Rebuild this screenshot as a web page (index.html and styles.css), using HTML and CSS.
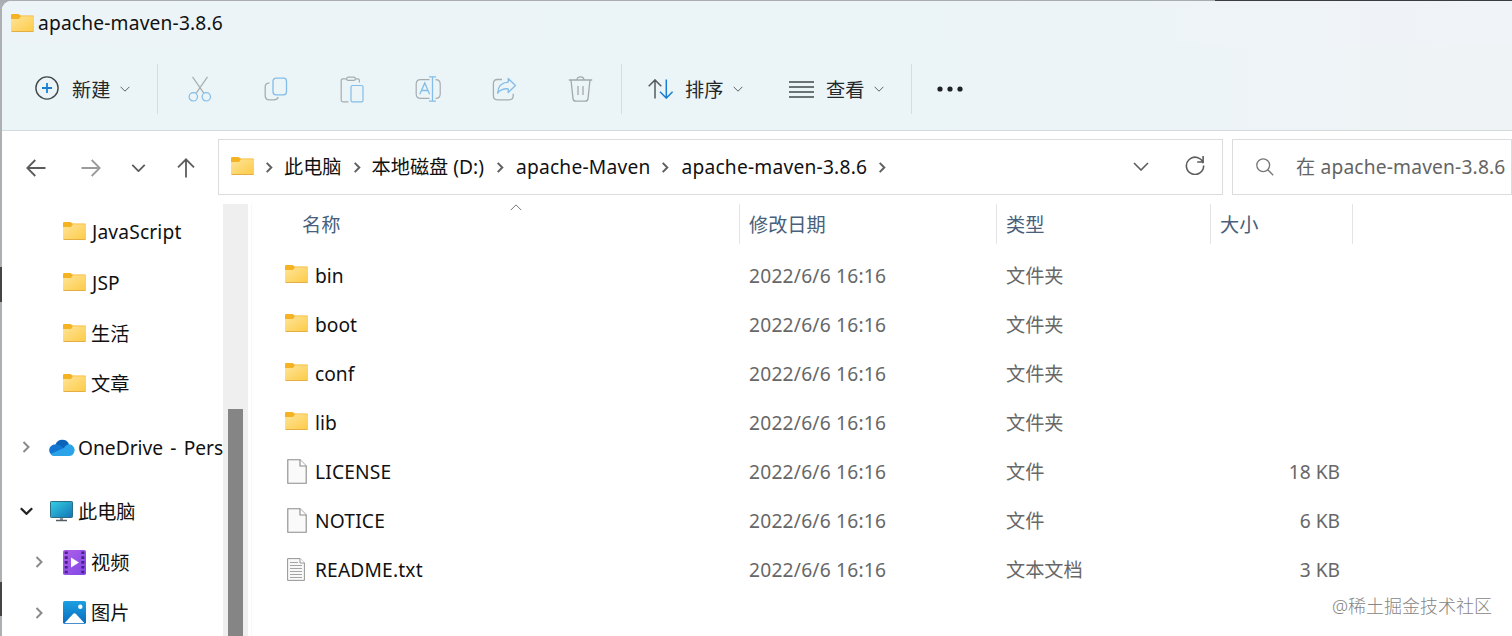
FILE: index.html
```html
<!DOCTYPE html>
<html lang="zh-CN">
<head>
    <meta charset="UTF-8">
    <meta name="viewport" content="width=device-width, initial-scale=1.0">
    <title>apache-maven-3.8.6</title>
    <link rel="stylesheet" href="styles.css">
</head>
<body>

<!-- shared icons -->
<svg class="defs" width="0" height="0">
    <defs>
        <linearGradient id="folderFill" x1="0" y1="0" x2="1" y2="1">
            <stop offset="0" stop-color="#ffe59a"/>
            <stop offset="1" stop-color="#fcca45"/>
        </linearGradient>
        <linearGradient id="screenFill" x1="0" y1="0" x2="1" y2="1">
            <stop offset="0" stop-color="#35cfe3"/>
            <stop offset="1" stop-color="#1273b8"/>
        </linearGradient>
        <linearGradient id="videoFill" x1="0" y1="0" x2="1" y2="1">
            <stop offset="0" stop-color="#b05fe8"/>
            <stop offset="1" stop-color="#8048e6"/>
        </linearGradient>
        <linearGradient id="pictureFill" x1="0" y1="0" x2="0" y2="1">
            <stop offset="0" stop-color="#1ba0e2"/>
            <stop offset="1" stop-color="#0b6cbd"/>
        </linearGradient>
    </defs>
    <symbol id="folder" viewBox="0 0 23 18">
        <path d="M0 1.2Q0 0 1.2 0H7.5L9.7 1.5H21.8Q23 1.5 23 2.7V8H0Z" fill="#f5b324"/>
        <path d="M0 5H8L10 2.2H22.2Q23 2.2 23 3V16.8Q23 18 21.8 18H1.2Q0 18 0 16.8Z" fill="url(#folderFill)"/>
        <path d="M.6 17.5H22.4" stroke="#e5ae43" stroke-width="1"/>
    </symbol>
    <symbol id="file" viewBox="0 0 20 25">
        <path d="M.8 .8H13L19.2 7V24.2H.8Z" fill="#fafafa" stroke="#8a8a8a" stroke-width="1.1"/>
        <path d="M13 .8V7H19.2" fill="#fff" stroke="#8a8a8a" stroke-width="1.1"/>
    </symbol>
    <symbol id="textfile" viewBox="0 0 18 23">
        <path d="M.6 .6H13L17.4 5V22.4H.6Z" fill="#f8f8f8" stroke="#959595"/>
        <path d="M13 .6V5H17.4" fill="#fff" stroke="#959595"/>
        <path d="M3 4.5H11M3 7.5H15M3 10.5H15M3 13.5H15M3 16.5H15M3 19.5H15" stroke="#a5a5a5"/>
    </symbol>
    <symbol id="down" viewBox="0 0 16 9">
        <path d="M1 1L8 8L15 1" fill="none" stroke="currentColor" vector-effect="non-scaling-stroke"/>
    </symbol>
    <symbol id="right" viewBox="0 0 8 12">
        <path d="M1.5 1L6.5 6L1.5 11" fill="none" stroke="currentColor" vector-effect="non-scaling-stroke"/>
    </symbol>
</svg>

<div class="window">
    <div class="titlebar">
        <svg class="folder"><use href="#folder"/></svg>
        <span class="latin">apache-maven-3.8.6</span>
    </div>

    <div class="toolbar">
        <div class="tool new">
            <svg width="24" height="24" viewBox="0 0 24 24" fill="none">
                <circle cx="12" cy="12" r="11.1" stroke="#41484c" stroke-width="1.4"/>
                <path d="M12 7V17M7 12H17" stroke="#1a7fd4" stroke-width="1.8"/>
            </svg>
            <span>新建</span>
            <svg class="caret"><use href="#down"/></svg>
        </div>
        <div class="divider"></div>
        <div class="actions">
            <div class="action">
                <svg width="24" height="26" viewBox="0 0 24 26" fill="none" stroke-width="1.2">
                    <path d="M4.5 .8L15.8 17.2M19.5 .8L8.2 17.2" stroke="#a6adb1"/>
                    <circle cx="5.3" cy="20.8" r="4.2" stroke="#83bde8"/>
                    <circle cx="18.3" cy="20.8" r="4.2" stroke="#83bde8"/>
                </svg>
            </div>
            <div class="action">
                <svg width="24" height="24" viewBox="0 0 24 24" fill="none" stroke-width="1.3">
                    <path d="M5.5 5.8Q1.2 6 1.2 9.8V18.5Q1.2 22.8 5.5 22.8H9.5Q13.5 22.8 14.2 20" stroke="#a6adb1"/>
                    <rect x="9" y="1.2" width="13.5" height="16.6" rx="3" stroke="#83bde8"/>
                </svg>
            </div>
            <div class="action">
                <svg width="24" height="27" viewBox="0 0 24 27" fill="none" stroke-width="1.2">
                    <path d="M6.8 2.8H3Q1.2 2.8 1.2 4.6V24Q1.2 25.8 3 25.8H8.5M15.4 2.8H17.7Q19.4 2.8 19.4 4.6V6.5" stroke="#a6adb1"/>
                    <rect x="6.6" y="1.2" width="8.8" height="3.2" rx="1.6" stroke="#a6adb1"/>
                    <rect x="11" y="9.5" width="12" height="16.3" rx="1.6" stroke="#83bde8"/>
                </svg>
            </div>
            <div class="action">
                <svg width="27" height="26" viewBox="0 0 27 26" fill="none" stroke-width="1.2">
                    <path d="M14.5 3.7H5.6Q1.2 3.7 1.2 8.1V17.9Q1.2 22.3 5.6 22.3H14.5M20.5 3.7Q25.2 3.7 25.2 8.1V17.9Q25.2 22.3 20.5 22.3" stroke="#a6adb1"/>
                    <path d="M14 .8H21M17.5 .8V25.2M14 25.2H21M4.8 18.3L9.8 7L14.6 18.3M6.5 14.5H13" stroke="#83bde8" stroke-width="1.3"/>
                </svg>
            </div>
            <div class="action">
                <svg width="25" height="24" viewBox="0 0 25 24" fill="none" stroke-width="1.3" stroke-linejoin="round">
                    <path d="M10 2.5H5.4Q1.4 2.5 1.4 6.5V18.8Q1.4 22.8 5.4 22.8H17.2Q21.2 22.8 21.2 18.8V16.8" stroke="#a6adb1"/>
                    <path d="M16.2 1.5L23.5 8.5L16.2 15.5V11.8Q9 11.3 5.6 16.2Q6.4 5.7 16.2 5.2Z" stroke="#83bde8"/>
                </svg>
            </div>
            <div class="action">
                <svg width="25" height="26" viewBox="0 0 25 26" fill="none" stroke="#a2a9ad" stroke-width="1.3">
                    <path d="M.8 4H24.2M9 4Q9 .8 12.5 .8T16 4M3 4L5 22.6Q5.3 25.2 8 25.2H17Q19.7 25.2 20 22.6L22 4M10 10V19M15 10V19"/>
                </svg>
            </div>
        </div>
        <div class="divider"></div>
        <div class="tool sort">
            <svg width="26" height="20" viewBox="0 0 26 20" fill="none" stroke-width="1.5">
                <path d="M7 19.5V1M.7 7.2L7 .9L13.3 7.2" stroke="#555b5f"/>
                <path d="M18.3 .5V19M12 12.8L18.3 19.1L24.6 12.8" stroke="#1a7fd4"/>
            </svg>
            <span>排序</span>
            <svg class="caret"><use href="#down"/></svg>
        </div>
        <div class="tool view">
            <svg width="25" height="17" viewBox="0 0 25 17" stroke="#41484c" stroke-width="1.3">
                <path d="M0 1H25M0 6H25M0 11H25M0 16H25"/>
            </svg>
            <span>查看</span>
            <svg class="caret"><use href="#down"/></svg>
        </div>
        <div class="divider"></div>
        <svg class="more" width="26" height="6" viewBox="0 0 26 6" fill="#1f2224">
            <circle cx="3" cy="3" r="2.6"/>
            <circle cx="13" cy="3" r="2.6"/>
            <circle cx="23" cy="3" r="2.6"/>
        </svg>
    </div>

    <div class="navbar">
        <div class="history">
            <svg width="20" height="18" viewBox="0 0 20 18" fill="none" stroke="#5c5c5c" stroke-width="1.8"><path d="M19.5 9H1.5M9.3 1L1.3 9L9.3 17"/></svg>
            <svg width="20" height="18" viewBox="0 0 20 18" fill="none" stroke="#9b9b9b" stroke-width="1.8"><path d="M.5 9H18.5M10.7 1L18.7 9L10.7 17"/></svg>
            <svg class="recent"><use href="#down"/></svg>
            <svg width="18" height="20" viewBox="0 0 18 20" fill="none" stroke="#5c5c5c" stroke-width="1.8"><path d="M9 19.5V1.5M1 9.3L9 1.3L17 9.3"/></svg>
        </div>
        <div class="address">
            <svg class="folder"><use href="#folder"/></svg>
            <svg class="sep"><use href="#right"/></svg>
            <span class="crumb">此电脑</span>
            <svg class="sep"><use href="#right"/></svg>
            <span class="crumb">本地磁盘 (D:)</span>
            <svg class="sep"><use href="#right"/></svg>
            <span class="crumb latin">apache-Maven</span>
            <svg class="sep"><use href="#right"/></svg>
            <span class="crumb latin">apache-maven-3.8.6</span>
            <svg class="sep"><use href="#right"/></svg>
            <svg class="drop"><use href="#down"/></svg>
            <svg class="refresh" width="20" height="20" viewBox="0 0 20 20" fill="none" stroke="#5c5c5c" stroke-width="1.6">
                <path d="M18.2 8.2A8.6 8.6 0 1 0 18.6 10.5M18.1 1V7H12.2"/>
            </svg>
        </div>
        <div class="search">
            <svg width="18" height="18" viewBox="0 0 18 18" fill="none" stroke="#767676" stroke-width="1.3">
                <circle cx="7.2" cy="7.2" r="6.4"/>
                <path d="M11.8 11.8L17.2 17.2"/>
            </svg>
            <span class="latin">在 apache-maven-3.8.6</span>
        </div>
    </div>

    <div class="content">
        <div class="sidebar">
            <div class="node"><svg class="folder"><use href="#folder"/></svg><span class="latin">JavaScript</span></div>
            <div class="node"><svg class="folder"><use href="#folder"/></svg><span class="latin">JSP</span></div>
            <div class="node"><svg class="folder"><use href="#folder"/></svg><span>生活</span></div>
            <div class="node"><svg class="folder"><use href="#folder"/></svg><span>文章</span></div>
            <div class="node root">
                <svg class="expand"><use href="#right"/></svg>
                <svg width="26" height="17" viewBox="0 0 26 17">
                    <path d="M6.5 5.5A7.3 7.3 0 0 1 20 5.2L16 11L4 15Z" fill="#0a63b8"/>
                    <path d="M5 16.6A5.5 5.5 0 0 1 6.5 5.6Q9 5 11 6.5L19 12L14 16.6Z" fill="#1276d1"/>
                    <path d="M15 9Q17 5.3 20.3 5.3A5.7 5.7 0 0 1 25 13.5Q23.8 17 20 17H5Q2.7 16.8 1.5 15Z" fill="#2aa3e8"/>
                </svg>
                <span class="onedrive">OneDrive - Pers</span>
            </div>
            <div class="node root pc">
                <svg class="expand open"><use href="#down"/></svg>
                <svg width="23" height="21" viewBox="0 0 23 21">
                    <rect x=".5" y=".5" width="22" height="16" rx=".8" fill="url(#screenFill)" stroke="#2c6d84"/>
                    <path d="M10 17H13V19H10Z" fill="#8a9398"/>
                    <path d="M6 19.5H17" stroke="#565d61" stroke-width="1.5"/>
                </svg>
                <span>此电脑</span>
            </div>
            <div class="node child">
                <svg class="expand"><use href="#right"/></svg>
                <svg width="23" height="25" viewBox="0 0 23 25">
                    <rect width="23" height="25" rx="1.8" fill="url(#videoFill)"/>
                    <path d="M3.2 1.5V24M19.8 1.5V24" stroke="#48218f" stroke-width="3" stroke-dasharray="2.6 2.2"/>
                    <path d="M8 7.5V17.5L16 12.5Z" fill="#fff"/>
                </svg>
                <span>视频</span>
            </div>
            <div class="node child">
                <svg class="expand"><use href="#right"/></svg>
                <svg width="23" height="23" viewBox="0 0 23 23">
                    <rect width="23" height="23" rx="1.8" fill="url(#pictureFill)"/>
                    <path d="M1.5 22.2L10 13Q11.5 11.6 13 13L21.5 22.2Z" fill="#fff"/>
                    <circle cx="17.3" cy="5.7" r="2.2" fill="#fff"/>
                </svg>
                <span>图片</span>
            </div>
        </div>
        <div class="scrollbar"><div class="thumb"></div></div>

        <div class="files">
            <div class="row head">
                <div class="name">名称<svg class="sorted"><use href="#down"/></svg></div>
                <div>修改日期</div>
                <div>类型</div>
                <div class="size">大小</div>
            </div>
            <div class="row"><div class="name"><svg class="folder"><use href="#folder"/></svg>bin</div><div class="date">2022/6/6 16:16</div><div>文件夹</div></div>
            <div class="row"><div class="name"><svg class="folder"><use href="#folder"/></svg>boot</div><div class="date">2022/6/6 16:16</div><div>文件夹</div></div>
            <div class="row"><div class="name"><svg class="folder"><use href="#folder"/></svg>conf</div><div class="date">2022/6/6 16:16</div><div>文件夹</div></div>
            <div class="row"><div class="name"><svg class="folder"><use href="#folder"/></svg>lib</div><div class="date">2022/6/6 16:16</div><div>文件夹</div></div>
            <div class="row"><div class="name latin"><svg class="file"><use href="#file"/></svg>LICENSE</div><div class="date">2022/6/6 16:16</div><div>文件</div><div class="size">18 KB</div></div>
            <div class="row"><div class="name latin"><svg class="file"><use href="#file"/></svg>NOTICE</div><div class="date">2022/6/6 16:16</div><div>文件</div><div class="size">6 KB</div></div>
            <div class="row"><div class="name latin"><svg class="textfile"><use href="#textfile"/></svg>README.txt</div><div class="date">2022/6/6 16:16</div><div>文本文档</div><div class="size">3 KB</div></div>
        </div>
    </div>
</div>

<div class="watermark">@稀土掘金技术社区</div>

</body>
</html>
```
FILE: styles.css
```css
* { box-sizing: border-box; }
body {
    margin: 0;
    height: 636px;
    overflow: hidden;
    padding: 1px 0 0 2px;
    font-family: "Noto Sans", "Noto Sans CJK SC", sans-serif;
    font-size: 19.2px;
    line-height: 28px;
    color: #111;
    background:
        linear-gradient(#444, #444) 0 267px / 2px 35px no-repeat,
        linear-gradient(#444, #444) 0 582px / 2px 34px no-repeat,
        linear-gradient(90deg, #a9adaf 1215px, #3b3c40 1215px) 0 0 / 100% 2px no-repeat,
        #adb0b2;
}
svg { display: block; flex: none; }
span { white-space: nowrap; }
.latin { letter-spacing: .17px; }
.defs { position: absolute; }
.window {
    height: 635px;
    background: #fff;
    border-top-left-radius: 9px;
    overflow: hidden;
}
.folder { width: 23px; height: 18px; }

/* title and command bar */
.titlebar {
    display: flex;
    align-items: center;
    gap: 4px;
    height: 44px;
    padding-left: 9px;
    background: linear-gradient(90deg, #ecf4f8, #ebf4f7 60%, #f0f3f8);
}
.toolbar {
    display: flex;
    align-items: center;
    height: 86px;
    padding-top: 3px;
    background: linear-gradient(90deg, #ebf4f7 60%, #eff3f6);
    border-bottom: 1px solid #d5dadd;
}
.tool { display: flex; align-items: center; color: #24282b; }
.tool span { margin-left: 12px; padding-top: 2px; }
.new { width: 155px; padding-left: 33px; }
.new svg:first-child { margin-top: -2px; }
.new span { margin-left: 13px; }
.sort { width: 141px; padding-left: 26px; }
.sort span { margin-left: 11px; }
.view { width: 148px; padding-left: 26px; }
.caret { width: 10px; height: 6px; margin-left: 10px; color: #5c6367; }
.divider { width: 1px; height: 50px; background: #d6dde1; }
.actions { display: flex; width: 463px; padding-left: 4px; }
.action {
    display: flex;
    justify-content: center;
    align-items: center;
    width: 76px;
}
.more { margin-left: 25px; }

/* navigation */
.navbar { display: flex; height: 73px; padding-top: 8px; }
.history {
    display: flex;
    align-items: center;
    width: 216px;
    height: 56px;
    padding: 2px 0 0 24px;
}
.history svg + svg { margin-left: 35px; }
.history .recent {
    width: 15px;
    height: 8px;
    margin-left: 30px;
    color: #5c5c5c;
    stroke-width: 1.8;
}
.history .recent + svg { margin-left: 31px; }
.address, .search {
    display: flex;
    align-items: center;
    height: 56px;
    border: 1px solid #dcdcde;
}
.address { width: 1005px; padding-left: 12px; }
.address .folder { margin: -2px 11px 0 0; }
.sep { width: 8px; height: 11px; color: #606060; stroke-width: 2; }
.crumb { margin: 0 11px; }
.crumb.latin { margin: 0 11px 0 12px; letter-spacing: .21px; }
.crumb + .sep + .crumb:not(.latin) { margin-right: 12px; }
.drop { width: 16px; height: 9px; margin: -2px 1px 0 auto; color: #5c5c5c; stroke-width: 1.6; }
.refresh { margin: -4px 17px 0 35px; }
.search {
    flex: 1;
    margin-left: 9px;
    padding-left: 23px;
    overflow: hidden;
    color: #646464;
}
.search span { margin-left: 22px; }

/* tree */
.content { display: flex; height: 432px; }
.sidebar { width: 221px; padding-top: 2px; overflow: hidden; }
.node {
    display: flex;
    align-items: center;
    gap: 5px;
    height: 50.7px;
    padding-left: 61px;
}
.node span { padding-top: 2px; }
.node .latin { padding-left: 1px; }
.root { gap: 4px; height: 51px; margin-top: 13px; padding-left: 20px; }
.root .expand { margin-right: 15px; }
.node .onedrive { margin-left: -1px; padding-top: 1px; word-spacing: 2.2px; }
.pc { gap: 5px; }
.child { padding-left: 33px; }
.child .expand { margin-right: 15px; }
.child span { padding-top: 1px; }
.expand { width: 8px; height: 12px; color: #8a8a8a; stroke-width: 2; }
.root .open { width: 13px; height: 8px; margin: 0 12px 0 -2px; color: #222; stroke-width: 2.2; }
.scrollbar { width: 25px; padding: 205px 5px 0; background: #efefef; }
.thumb { height: 227px; background: #858585; }

/* file list */
.files {
    flex: 1;
    margin-left: 3px;
    border-left: 1px solid #f8f8f8;
}
.row {
    display: grid;
    grid-template-columns: 488px 257px 214px 142px;
    align-items: center;
    height: 49.15px;
    color: #676767;
}
.row > div { padding-left: 9px; }
.row > .name {
    display: flex;
    align-items: center;
    gap: 7px;
    padding-left: 33px;
    color: #111;
}
.row > .date { letter-spacing: .22px; }
.row > .size { padding-right: 13px; text-align: right; }
.name .folder { margin-top: -3px; }
.name .file { width: 20px; height: 25px; margin: -1px 1px 0 2px; }
.name .textfile { width: 18px; height: 23px; margin: -2px 3px 0 2px; }
.head {
    height: 40px;
    margin-bottom: 7px;
}
.head > div {
    height: 40px;
    line-height: 41px;
    border-right: 1px solid #e4e4e4;
    color: #48607c;
}
.head > .name { position: relative; padding-left: 50px; color: #48607c; }
.head > .size { text-align: left; }
.sorted {
    position: absolute;
    left: 258px;
    top: 0;
    width: 12px;
    height: 7px;
    color: #777;
    transform: scaleY(-1);
}

.watermark {
    position: absolute;
    left: 1332px;
    top: 592px;
    font-size: 18px;
    font-weight: 300;
    color: #858585;
    text-shadow: 1px 1px 1px #fff;
}
```
